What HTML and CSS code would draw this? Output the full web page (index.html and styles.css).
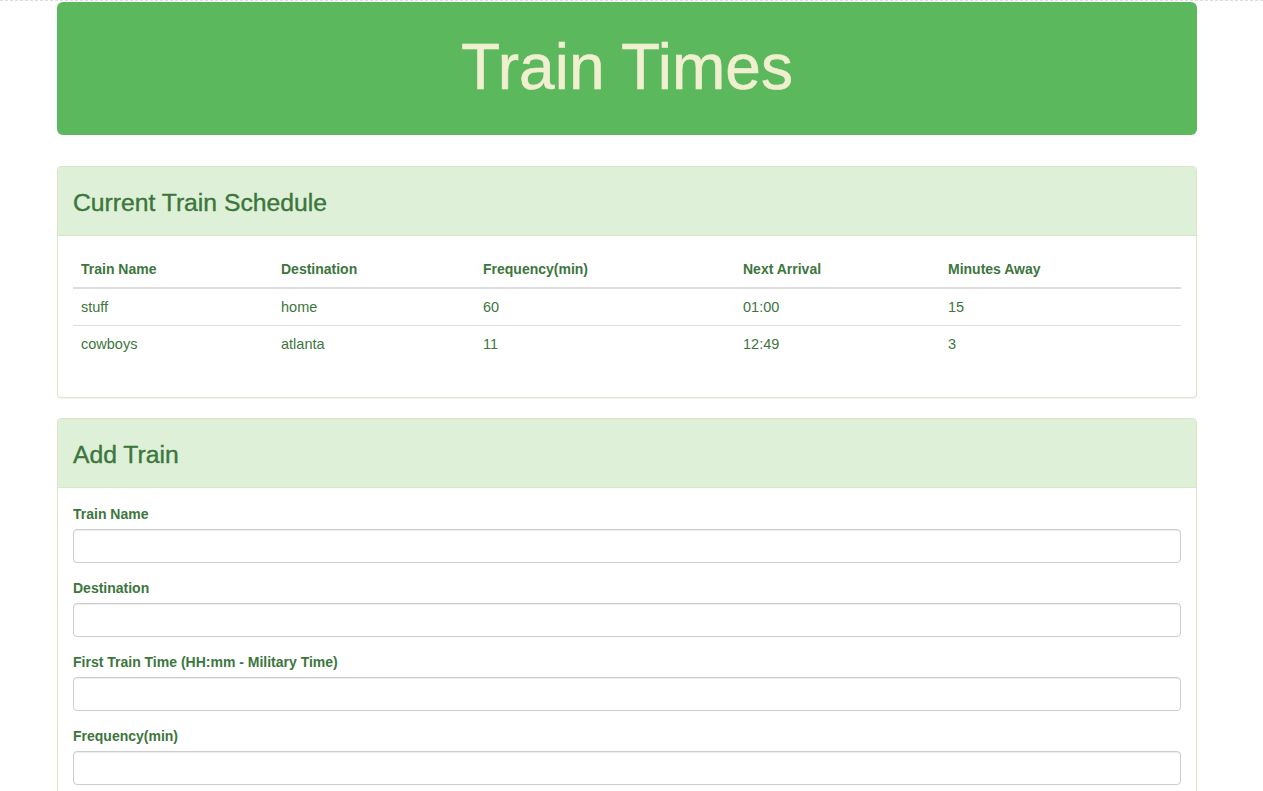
FILE: index.html
```html
<!DOCTYPE html>
<html lang="en">
<head>
<meta charset="utf-8">
<title>Train Times</title>
<link rel="stylesheet" href="styles.css">
</head>
<body>
<div class="topline"></div>
<div class="container">
  <div class="jumbotron">
    <h1>Train Times</h1>
  </div>

  <div class="panel">
    <div class="panel-heading">
      <h2 class="panel-title">Current Train Schedule</h2>
    </div>
    <div class="panel-body">
      <table class="table">
        <thead>
          <tr>
            <th class="c1">Train Name</th>
            <th class="c2">Destination</th>
            <th class="c3">Frequency(min)</th>
            <th class="c4">Next Arrival</th>
            <th>Minutes Away</th>
          </tr>
        </thead>
        <tbody>
          <tr>
            <td>stuff</td>
            <td>home</td>
            <td>60</td>
            <td>01:00</td>
            <td>15</td>
          </tr>
          <tr>
            <td>cowboys</td>
            <td>atlanta</td>
            <td>11</td>
            <td>12:49</td>
            <td>3</td>
          </tr>
        </tbody>
      </table>
    </div>
  </div>

  <div class="panel">
    <div class="panel-heading">
      <h2 class="panel-title">Add Train</h2>
    </div>
    <div class="panel-body form-body">
      <form class="form">
        <div class="form-group">
          <label for="name">Train Name</label>
          <input id="name" class="form-control" type="text">
        </div>
        <div class="form-group">
          <label for="dest">Destination</label>
          <input id="dest" class="form-control" type="text">
        </div>
        <div class="form-group">
          <label for="first">First Train Time (HH:mm - Military Time)</label>
          <input id="first" class="form-control" type="text">
        </div>
        <div class="form-group">
          <label for="freq">Frequency(min)</label>
          <input id="freq" class="form-control" type="text">
        </div>
      </form>
    </div>
  </div>
</div>
</body>
</html>
```

FILE: styles.css
```css
* {
  box-sizing: border-box;
}

html, body {
  margin: 0;
  padding: 0;
  background: #fff;
}

body {
  font-family: "Liberation Sans", Arial, Helvetica, sans-serif;
  font-size: 14px;
  line-height: 20px;
  color: #3c763d;
}

.topline {
  border-top: 1px dashed #dedede;
  height: 0;
}

.container {
  width: 1140px;
  margin-left: 57px;
  padding-top: 1px;
}

.jumbotron {
  background: #5cb85c;
  border-radius: 6px;
  padding: 31px 0 33px;
  text-align: center;
  margin-bottom: 31px;
}

.jumbotron h1 {
  margin: 0;
  font-size: 64px;
  line-height: 69px;
  font-weight: 400;
  color: #f0efcf;
  -webkit-text-stroke: 0.6px #f0efcf;
}

.panel {
  border: 1px solid #d9e6c8;
  border-radius: 4px;
  background: #fff;
  margin-bottom: 20px;
  box-shadow: 0 1px 1px rgba(0, 0, 0, 0.05);
}

.panel-heading {
  background: #dff0d8;
  border-bottom: 1px solid #d6e9c6;
  border-radius: 3px 3px 0 0;
  padding: 22px 15px 19px;
}

.panel-title {
  margin: 0;
  font-size: 24.7px;
  line-height: 27px;
  font-weight: 400;
  color: #3c763d;
  -webkit-text-stroke: 0.4px #3c763d;
}

.panel-body {
  padding: 15px;
}

.form-body {
  padding-top: 16px;
}

.table {
  width: 100%;
  border-collapse: collapse;
  border-spacing: 0;
  margin-bottom: 20px;
}

.table th,
.table td {
  text-align: left;
  padding: 8px;
  line-height: 20px;
  vertical-align: top;
}

.table th {
  font-weight: 700;
  border-bottom: 2px solid #ddd;
}

.table td {
  border-top: 1px solid #ddd;
  font-size: 14.5px;
}

.c1 { width: 200px; }
.c2 { width: 202px; }
.c3 { width: 260px; }
.c4 { width: 205px; }

.form-group {
  margin-bottom: 15px;
}

.form-group label {
  display: inline-block;
  font-weight: 700;
  margin-bottom: 5px;
  line-height: 20px;
}

.form-control {
  display: block;
  width: 100%;
  height: 34px;
  padding: 6px 12px;
  font-family: inherit;
  font-size: 14px;
  color: #555;
  background: #fff;
  border: 1px solid #ccc;
  border-radius: 4px;
  box-shadow: inset 0 1px 1px rgba(0, 0, 0, 0.075);
}
```
